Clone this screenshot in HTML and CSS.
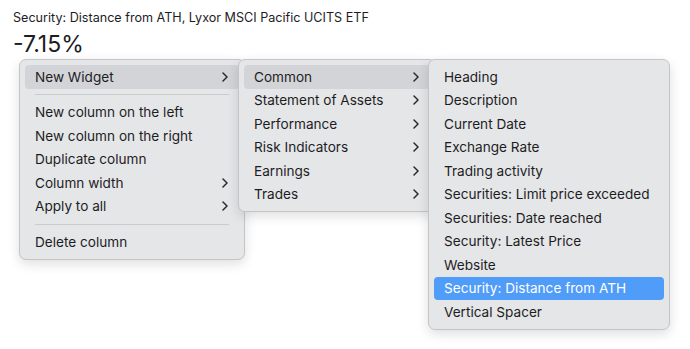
FILE: index.html
```html
<!DOCTYPE html>
<html lang="en">
<head>
    <meta charset="UTF-8">
    <title>Security: Distance from ATH</title>
    <link rel="stylesheet" href="styles.css">
</head>
<body>
    <div class="widget">
        <div class="widget-title">Security: Distance from ATH, Lyxor MSCI Pacific UCITS ETF</div>
        <div class="widget-value">-7.15%</div>
    </div>

    <!-- context menu: column menu -->
    <ul class="menu menu-column">
        <li class="item active">New Widget <svg class="chev" viewBox="0 0 6 10"><polyline points="1,1 5,5 1,9"/></svg></li>
        <li class="sep"></li>
        <li class="item">New column on the left</li>
        <li class="item">New column on the right</li>
        <li class="item">Duplicate column</li>
        <li class="item">Column width <svg class="chev" viewBox="0 0 6 10"><polyline points="1,1 5,5 1,9"/></svg></li>
        <li class="item">Apply to all <svg class="chev" viewBox="0 0 6 10"><polyline points="1,1 5,5 1,9"/></svg></li>
        <li class="sep"></li>
        <li class="item">Delete column</li>
    </ul>

    <!-- submenu: widget categories -->
    <ul class="menu menu-category">
        <li class="item active">Common <svg class="chev" viewBox="0 0 6 10"><polyline points="1,1 5,5 1,9"/></svg></li>
        <li class="item">Statement of Assets <svg class="chev" viewBox="0 0 6 10"><polyline points="1,1 5,5 1,9"/></svg></li>
        <li class="item">Performance <svg class="chev" viewBox="0 0 6 10"><polyline points="1,1 5,5 1,9"/></svg></li>
        <li class="item">Risk Indicators <svg class="chev" viewBox="0 0 6 10"><polyline points="1,1 5,5 1,9"/></svg></li>
        <li class="item">Earnings <svg class="chev" viewBox="0 0 6 10"><polyline points="1,1 5,5 1,9"/></svg></li>
        <li class="item">Trades <svg class="chev" viewBox="0 0 6 10"><polyline points="1,1 5,5 1,9"/></svg></li>
    </ul>

    <!-- submenu: common widgets -->
    <ul class="menu menu-widgets">
        <li class="item">Heading</li>
        <li class="item">Description</li>
        <li class="item">Current Date</li>
        <li class="item">Exchange Rate</li>
        <li class="item">Trading activity</li>
        <li class="item">Securities: Limit price exceeded</li>
        <li class="item">Securities: Date reached</li>
        <li class="item">Security: Latest Price</li>
        <li class="item">Website</li>
        <li class="item selected">Security: Distance from ATH</li>
        <li class="item">Vertical Spacer</li>
    </ul>
</body>
</html>
```

FILE: styles.css
```css
body {
    margin: 0;
    background-color: #ffffff;
    font-family: Inter, "Noto Sans", sans-serif;
    color: #1d1d1f;
}
.widget {
    padding: 9px 13px;
}
.widget-title {
    font-size: 12.6px;
    line-height: 17px;
}
.widget-value {
    font-size: 23px;
    line-height: 28px;
    margin-top: 4px;
}
.menu {
    position: absolute;
    top: 59px;
    margin: 0;
    padding: 5px;
    list-style: none;
    background-color: #e5e6e8;
    border: 1px solid #c4c5c8;
    border-radius: 7px;
    box-shadow: 0 4px 12px rgba(0,0,0,0.13);
    font-size: 13.6px;
}
.menu-column {
    left: 19px;
    width: 214px;
    z-index: 1;
}
.menu-category {
    left: 238px;
    width: 186px;
    z-index: 2;
}
.menu-widgets {
    left: 428px;
    width: 230px;
    z-index: 3;
}
.item {
    display: flex;
    align-items: center;
    justify-content: space-between;
    height: 23.5px;
    padding: 0 10px;
    border-radius: 4px;
    white-space: nowrap;
}
.item.active {
    background-color: #d3d4d7;
}
.item.selected {
    background-color: #4f9cf9;
    color: #ffffff;
}
.sep {
    height: 1px;
    margin: 5.5px 10px;
    background-color: #cacbcd;
}
.chev {
    width: 6px;
    height: 10px;
    fill: none;
    stroke: #2a2a2c;
    stroke-width: 1.5;
    stroke-linecap: round;
    stroke-linejoin: round;
    margin-right: 1px;
}
```
